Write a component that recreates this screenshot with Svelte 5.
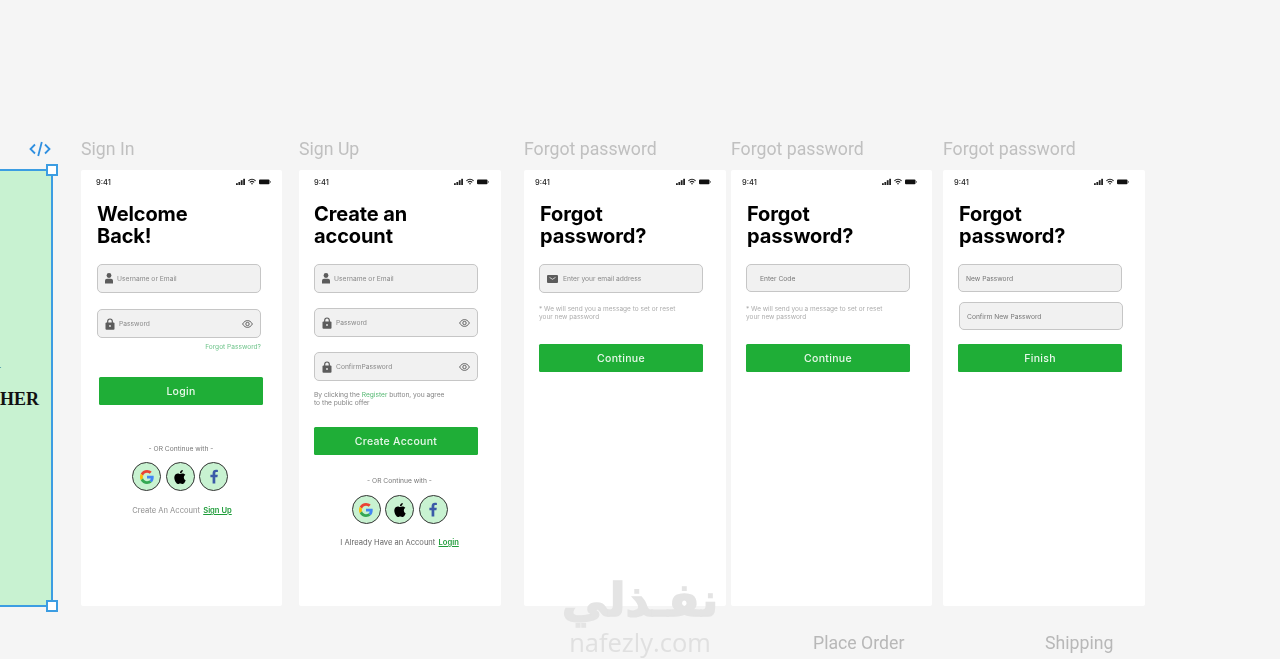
<script lang="ts">
	const screens = [
		{ name: 'Sign In', left: 81, width: 201, kind: 'signin', title: ['Welcome', 'Back!'], inset: 16, titleShift: 0, barLeft: 15, barRight: 11 },
		{ name: 'Sign Up', left: 299, width: 202, kind: 'signup', title: ['Create an', 'account'], inset: 15, titleShift: 0, barLeft: 15, barRight: 12 },
		{ name: 'Forgot password', left: 524, width: 202, kind: 'email', title: ['Forgot', 'password?'], inset: 15, titleShift: 1, barLeft: 11, barRight: 15 },
		{ name: 'Forgot password', left: 731, width: 201, kind: 'code', title: ['Forgot', 'password?'], inset: 15, titleShift: 1, barLeft: 11, barRight: 15 },
		{ name: 'Forgot password', left: 943, width: 202, kind: 'reset', title: ['Forgot', 'password?'], inset: 15, titleShift: 1, barLeft: 11, barRight: 16 }
	];
</script>

{#snippet statusBar(l: number, r: number)}
	<div class="status" style="left: {l}px; right: {r}px">
		<span class="clock">9:41</span>
		<svg width="35" height="8" viewBox="0 0 35 8">
			<rect x="0" y="5.200" width="1.800" height="1.800" fill="#222" />
			<rect x="2.400" y="4" width="1.800" height="3" fill="#222" />
			<rect x="4.800" y="2.200" width="1.800" height="4.800" fill="#222" />
			<rect x="7.200" y="0.800" width="1.800" height="6.200" fill="#222" />
			<path d="M12.400 2.800a5.400 5.400 0 0 1 7.200 0M13.800 4.300a3.300 3.300 0 0 1 4.400 0" stroke="#222" stroke-width="1.100" fill="none" />
			<path d="M15 5.400l1 1.400 1-1.400a1.500 1.500 0 0 0-2 0z" fill="#222" />
			<rect x="23" y="1.600" width="10.500" height="4.600" rx="1" fill="#111" />
			<rect x="33.900" y="3" width="0.900" height="1.800" fill="#666" />
		</svg>
	</div>
{/snippet}

{#snippet userIcon()}
	<svg class="icon" width="8" height="11" viewBox="0 0 8 11">
		<circle cx="4" cy="2.500" r="2.400" fill="#5c5c5c" />
		<path d="M0 10.600V7.800c0-1.300.9-2 2-2h4c1.100 0 2 .7 2 2v2.800z" fill="#5c5c5c" />
	</svg>
{/snippet}

{#snippet lockIcon()}
	<svg class="icon" width="10" height="12" viewBox="0 0 10 12">
		<path d="M2.700 5V3.300a2.300 2.300 0 0 1 4.600 0V5" stroke="#5c5c5c" stroke-width="1.200" fill="none" />
		<rect x="0.500" y="4.600" width="9" height="7.200" rx="1" fill="#5c5c5c" />
		<circle cx="5" cy="8" r="0.900" fill="#eee" />
	</svg>
{/snippet}

{#snippet mailIcon()}
	<svg class="icon mail" width="11" height="8" viewBox="0 0 11 8">
		<rect width="11" height="8" rx="1" fill="#5c5c5c" />
		<path d="M2.500 2.400L5.500 4.300L8.500 2.400" stroke="#eee" stroke-width="0.800" fill="none" />
	</svg>
{/snippet}

{#snippet eyeIcon()}
	<svg class="eye" width="11" height="8" viewBox="0 0 11 8">
		<path d="M0.600 4C2 1.600 3.700.6 5.500.6S9 1.600 10.400 4C9 6.400 7.300 7.400 5.500 7.400S2 6.400.6 4z" stroke="#555" stroke-width="0.900" fill="none" />
		<circle cx="5.500" cy="4" r="1.700" stroke="#555" stroke-width="0.900" fill="none" />
	</svg>
{/snippet}

{#snippet field(label: string, icon = '', eye = false, cls = '')}
	<div class="field {cls}">
		{#if icon === 'user'}{@render userIcon()}{/if}
		{#if icon === 'lock'}{@render lockIcon()}{/if}
		{#if icon === 'mail'}{@render mailIcon()}{/if}
		<span>{label}</span>
		{#if eye}{@render eyeIcon()}{/if}
	</div>
{/snippet}

{#snippet socials()}
	<p class="or">- OR Continue with -</p>
	<div class="socials">
		<div class="social">
			<svg width="14" height="14" viewBox="0 0 48 48">
				<path fill="#EA4335" d="M24 9.500c3.540 0 6.710 1.220 9.210 3.600l6.850-6.850C35.900 2.380 30.470 0 24 0 14.620 0 6.510 5.380 2.560 13.220l7.980 6.190C12.430 13.720 17.740 9.500 24 9.500z" />
				<path fill="#4285F4" d="M46.980 24.550c0-1.570-.15-3.090-.38-4.550H24v9.020h12.940c-.58 2.960-2.260 5.480-4.780 7.180l7.730 6c4.510-4.180 7.090-10.360 7.090-17.650z" />
				<path fill="#FBBC05" d="M10.530 28.590c-.48-1.450-.76-2.990-.76-4.590s.27-3.140.76-4.590l-7.980-6.190C.92 16.460 0 20.120 0 24c0 3.880.92 7.540 2.560 10.780l7.970-6.190z" />
				<path fill="#34A853" d="M24 48c6.480 0 11.930-2.130 15.890-5.810l-7.730-6c-2.150 1.450-4.920 2.300-8.160 2.300-6.260 0-11.570-4.220-13.470-9.910l-7.980 6.190C6.510 42.620 14.620 48 24 48z" />
			</svg>
		</div>
		<div class="social">
			<svg width="14" height="14" viewBox="0 0 24 24">
				<path fill="#000" d="M12.152 6.896c-.948 0-2.415-1.078-3.960-1.040-2.040.027-3.910 1.183-4.961 3.014-2.117 3.675-.546 9.103 1.519 12.090 1.013 1.454 2.208 3.090 3.792 3.039 1.520-.065 2.090-.987 3.935-.987 1.831 0 2.350.987 3.960.948 1.637-.026 2.676-1.480 3.676-2.948 1.156-1.688 1.636-3.325 1.662-3.415-.039-.013-3.182-1.221-3.220-4.857-.026-3.040 2.480-4.494 2.597-4.559-1.429-2.090-3.623-2.324-4.390-2.376-2-.156-3.675 1.090-4.610 1.090zM15.530 3.830c.843-1.012 1.400-2.427 1.245-3.830-1.207.052-2.662.805-3.532 1.818-.78.896-1.454 2.338-1.273 3.714 1.338.104 2.715-.688 3.559-1.701" />
			</svg>
		</div>
		<div class="social">
			<svg width="14" height="15" viewBox="0 0 14 15">
				<path fill="#3b5aa8" d="M8.300 14.500V8.300h2.100l.4-2.500H8.300V4.400c0-.8.300-1.300 1.300-1.300h1.300V.9C10.500.8 9.800.7 9 .7 7 .7 5.600 1.900 5.600 4.100v1.700H3.400v2.500h2.200v6.200z" />
			</svg>
		</div>
	</div>
{/snippet}

<div class="canvas">
	<!-- selected frame running off the left of the canvas -->
	<svg class="code" width="22" height="16" viewBox="0 0 22 16">
		<path d="M6 3.500L1.500 8L6 12.500M16 3.500L20.500 8L16 12.500M12.800 1L9.200 15" stroke="#2f8fe0" stroke-width="1.800" fill="none" />
	</svg>
	<div class="selected">
		<span class="cut-y">Y</span>
		<span class="cut-her">HER</span>
		<i class="handle top"></i>
		<i class="handle bottom"></i>
	</div>

	{#each screens as s}
		<span class="frame-name" style="left: {s.left}px">{s.name}</span>
		<section class="frame" style="left: {s.left}px; width: {s.width}px; padding-left: {s.inset}px">
			{@render statusBar(s.barLeft, s.barRight)}
			<h1 style="margin-left: {s.titleShift}px">{s.title[0]}<br />{s.title[1]}</h1>

			{#if s.kind === 'signin'}
				{@render field('Username or Email', 'user')}
				{@render field('Password', 'lock', true, 'gap-16')}
				<p class="forgot">Forgot Password?</p>
				<button class="cta login">Login</button>
				<div class="below first">
					{@render socials()}
					<p class="switch">Create An Account <a href="#signup">Sign Up</a></p>
				</div>
			{:else if s.kind === 'signup'}
				{@render field('Username or Email', 'user')}
				{@render field('Password', 'lock', true, 'gap-15')}
				{@render field('ConfirmPassword', 'lock', true, 'gap-15')}
				<p class="terms">By clicking the <em>Register</em> button, you agree<br />to the public offer</p>
				<button class="cta create">Create Account</button>
				<div class="below second">
					{@render socials()}
					<p class="switch dark">I Already Have an Account <a href="#login">Login</a></p>
				</div>
			{:else if s.kind === 'email'}
				{@render field('Enter your email address', 'mail')}
				<p class="note">* We will send you a message to set or reset<br />your new password</p>
				<button class="cta after-note">Continue</button>
			{:else if s.kind === 'code'}
				{@render field('Enter Code', '', false, 'plain')}
				<p class="note wide-gap">* We will send you a message to set or reset<br />your new password</p>
				<button class="cta after-note">Continue</button>
			{:else}
				{@render field('New Password', '', false, 'plain short')}
				{@render field('Confirm New Password', '', false, 'plain short nudge')}
				<button class="cta finish">Finish</button>
			{/if}
		</section>
	{/each}

	<span class="frame-name lower" style="left: 813px">Place Order</span>
	<span class="frame-name lower" style="left: 1045px">Shipping</span>

	<div class="mark">
		<span class="mark-ar" dir="rtl">نفـذلي</span>
		<span class="mark-en">nafezly.com</span>
	</div>
</div>

<style>
	:global(body) {
		margin: 0;
		background: #f5f5f5;
	}

	.canvas {
		position: relative;
		width: 1280px;
		height: 659px;
		overflow: hidden;
		background: #f5f5f5;
		font-family: Inter, 'Liberation Sans', sans-serif;
	}

	.code {
		position: absolute;
		left: 29px;
		top: 141px;
	}

	.selected {
		position: absolute;
		left: -20px;
		top: 169px;
		box-sizing: border-box;
		width: 73px;
		height: 438px;
		background: #c8f2d1;
		border: 2px solid #3c9de2;
	}

	.cut-y,
	.cut-her {
		position: absolute;
		font: 700 18px 'Liberation Serif', serif;
		color: #111;
		white-space: nowrap;
	}

	.cut-y {
		right: 50px;
		top: 193px;
		font-size: 12px;
	}

	.cut-her {
		right: 12px;
		top: 218px;
	}

	.handle {
		position: absolute;
		right: -7px;
		box-sizing: border-box;
		width: 12px;
		height: 12px;
		background: #fff;
		border: 2px solid #3c9de2;
	}

	.handle.top {
		top: -7px;
	}

	.handle.bottom {
		bottom: -7px;
	}

	.frame-name {
		position: absolute;
		top: 139px;
		font: 400 17.700px/20px Roboto, sans-serif;
		color: #c0c0c0;
		white-space: nowrap;
		filter: blur(0.3px);
	}

	.frame-name.lower {
		top: 633px;
		color: #b8b8b8;
	}

	.frame {
		position: absolute;
		top: 170px;
		height: 436px;
		box-sizing: border-box;
		background: #fff;
		border-radius: 2px;
		filter: blur(0.3px);
	}

	.status {
		position: absolute;
		top: 8px;
		display: flex;
		justify-content: space-between;
		align-items: center;
		height: 8px;
	}

	.clock {
		font-size: 7.500px;
		font-weight: 500;
		color: #222;
	}

	h1 {
		margin: 0;
		padding-top: 33px;
		font-size: 20px;
		line-height: 22px;
		font-weight: 700;
		letter-spacing: -0.1px;
		color: #000;
	}

	.field {
		display: flex;
		align-items: center;
		box-sizing: border-box;
		width: 164px;
		height: 29px;
		margin-top: 17px;
		padding: 0 8px 0 7px;
		gap: 4px;
		background: #f1f1f1;
		border: 1px solid #c6c6c6;
		border-radius: 5px;
		font-size: 6.700px;
		color: #8a8a8a;
	}

	.field span {
		flex: 1;
		padding-top: 1px;
	}

	.field.gap-16 {
		margin-top: 16px;
	}

	.field.gap-15 {
		margin-top: 15px;
	}

	.field.plain {
		height: 28px;
		padding-left: 13px;
		color: #777;
	}

	.field.short {
		padding-left: 7px;
	}

	.field.nudge {
		margin: 10px 0 0 1px;
	}

	.icon {
		flex: none;
	}

	.icon.mail {
		margin-right: 1px;
	}

	.eye {
		flex: none;
		margin-right: -1px;
	}

	.forgot {
		width: 164px;
		margin: 5px 0 0;
		text-align: right;
		font-size: 6.600px;
		line-height: 8px;
		color: #6fc48b;
	}

	.cta {
		display: block;
		width: 164px;
		height: 28px;
		padding: 0;
		border: 0;
		border-radius: 1.500px;
		background: #1fae37;
		color: #e8f8ea;
		font: 500 10.500px Inter, sans-serif;
		letter-spacing: 0.3px;
	}

	.login {
		margin: 26px 0 0 2px;
	}

	.create {
		margin-top: 20px;
	}

	.after-note {
		margin-top: 23px;
	}

	.finish {
		margin-top: 14px;
	}

	.terms,
	.note {
		margin: 0;
		line-height: 7.500px;
		white-space: nowrap;
	}

	.terms {
		margin-top: 11px;
		font-size: 6.650px;
		color: #858585;
	}

	.terms em {
		font-style: normal;
		color: #56b873;
	}

	.note {
		margin-top: 13px;
		font-size: 6.500px;
		color: #adadad;
	}

	.note.wide-gap {
		margin-top: 14px;
	}

	.below {
		width: 164px;
		text-align: center;
	}

	.below.first {
		margin: 40px 0 0 1px;
	}

	.below.second {
		margin: 22px 0 0 3.500px;
	}

	.or {
		margin: 0;
		font-size: 6.700px;
		line-height: 8px;
		color: #777;
	}

	.first .or {
		padding-left: 2px;
	}

	.socials {
		display: flex;
		justify-content: center;
		gap: 4.500px;
		margin-top: 10px;
	}

	.first .socials {
		margin-top: 9px;
	}

	.social {
		display: flex;
		align-items: center;
		justify-content: center;
		box-sizing: border-box;
		width: 29px;
		height: 29px;
		border: 1px solid #333;
		border-radius: 50%;
		background: #c8f2d1;
	}

	.switch {
		margin: 15px 0 0;
		padding-left: 4px;
		font-size: 7.600px;
		line-height: 9px;
		color: #8f8f8f;
	}

	.switch.dark {
		margin-top: 14px;
		padding-left: 0;
		color: #666;
	}

	.switch a {
		margin-left: 1px;
		font-weight: 600;
		color: #1f9c3a;
	}

	.mark {
		position: absolute;
		left: 562px;
		top: 574px;
		width: 156px;
		display: flex;
		flex-direction: column;
		align-items: center;
		color: #e4e4e4;
		pointer-events: none;
		filter: blur(0.5px);
	}

	.mark-ar {
		font: 700 46px/52px 'DejaVu Sans', sans-serif;
		-webkit-text-stroke: 1.500px #e4e4e4;
		white-space: nowrap;
	}

	.mark-en {
		margin-top: 2px;
		font: 500 25.500px/28px 'Open Sans', sans-serif;
		color: #e0e0e0;
		white-space: nowrap;
	}
</style>
